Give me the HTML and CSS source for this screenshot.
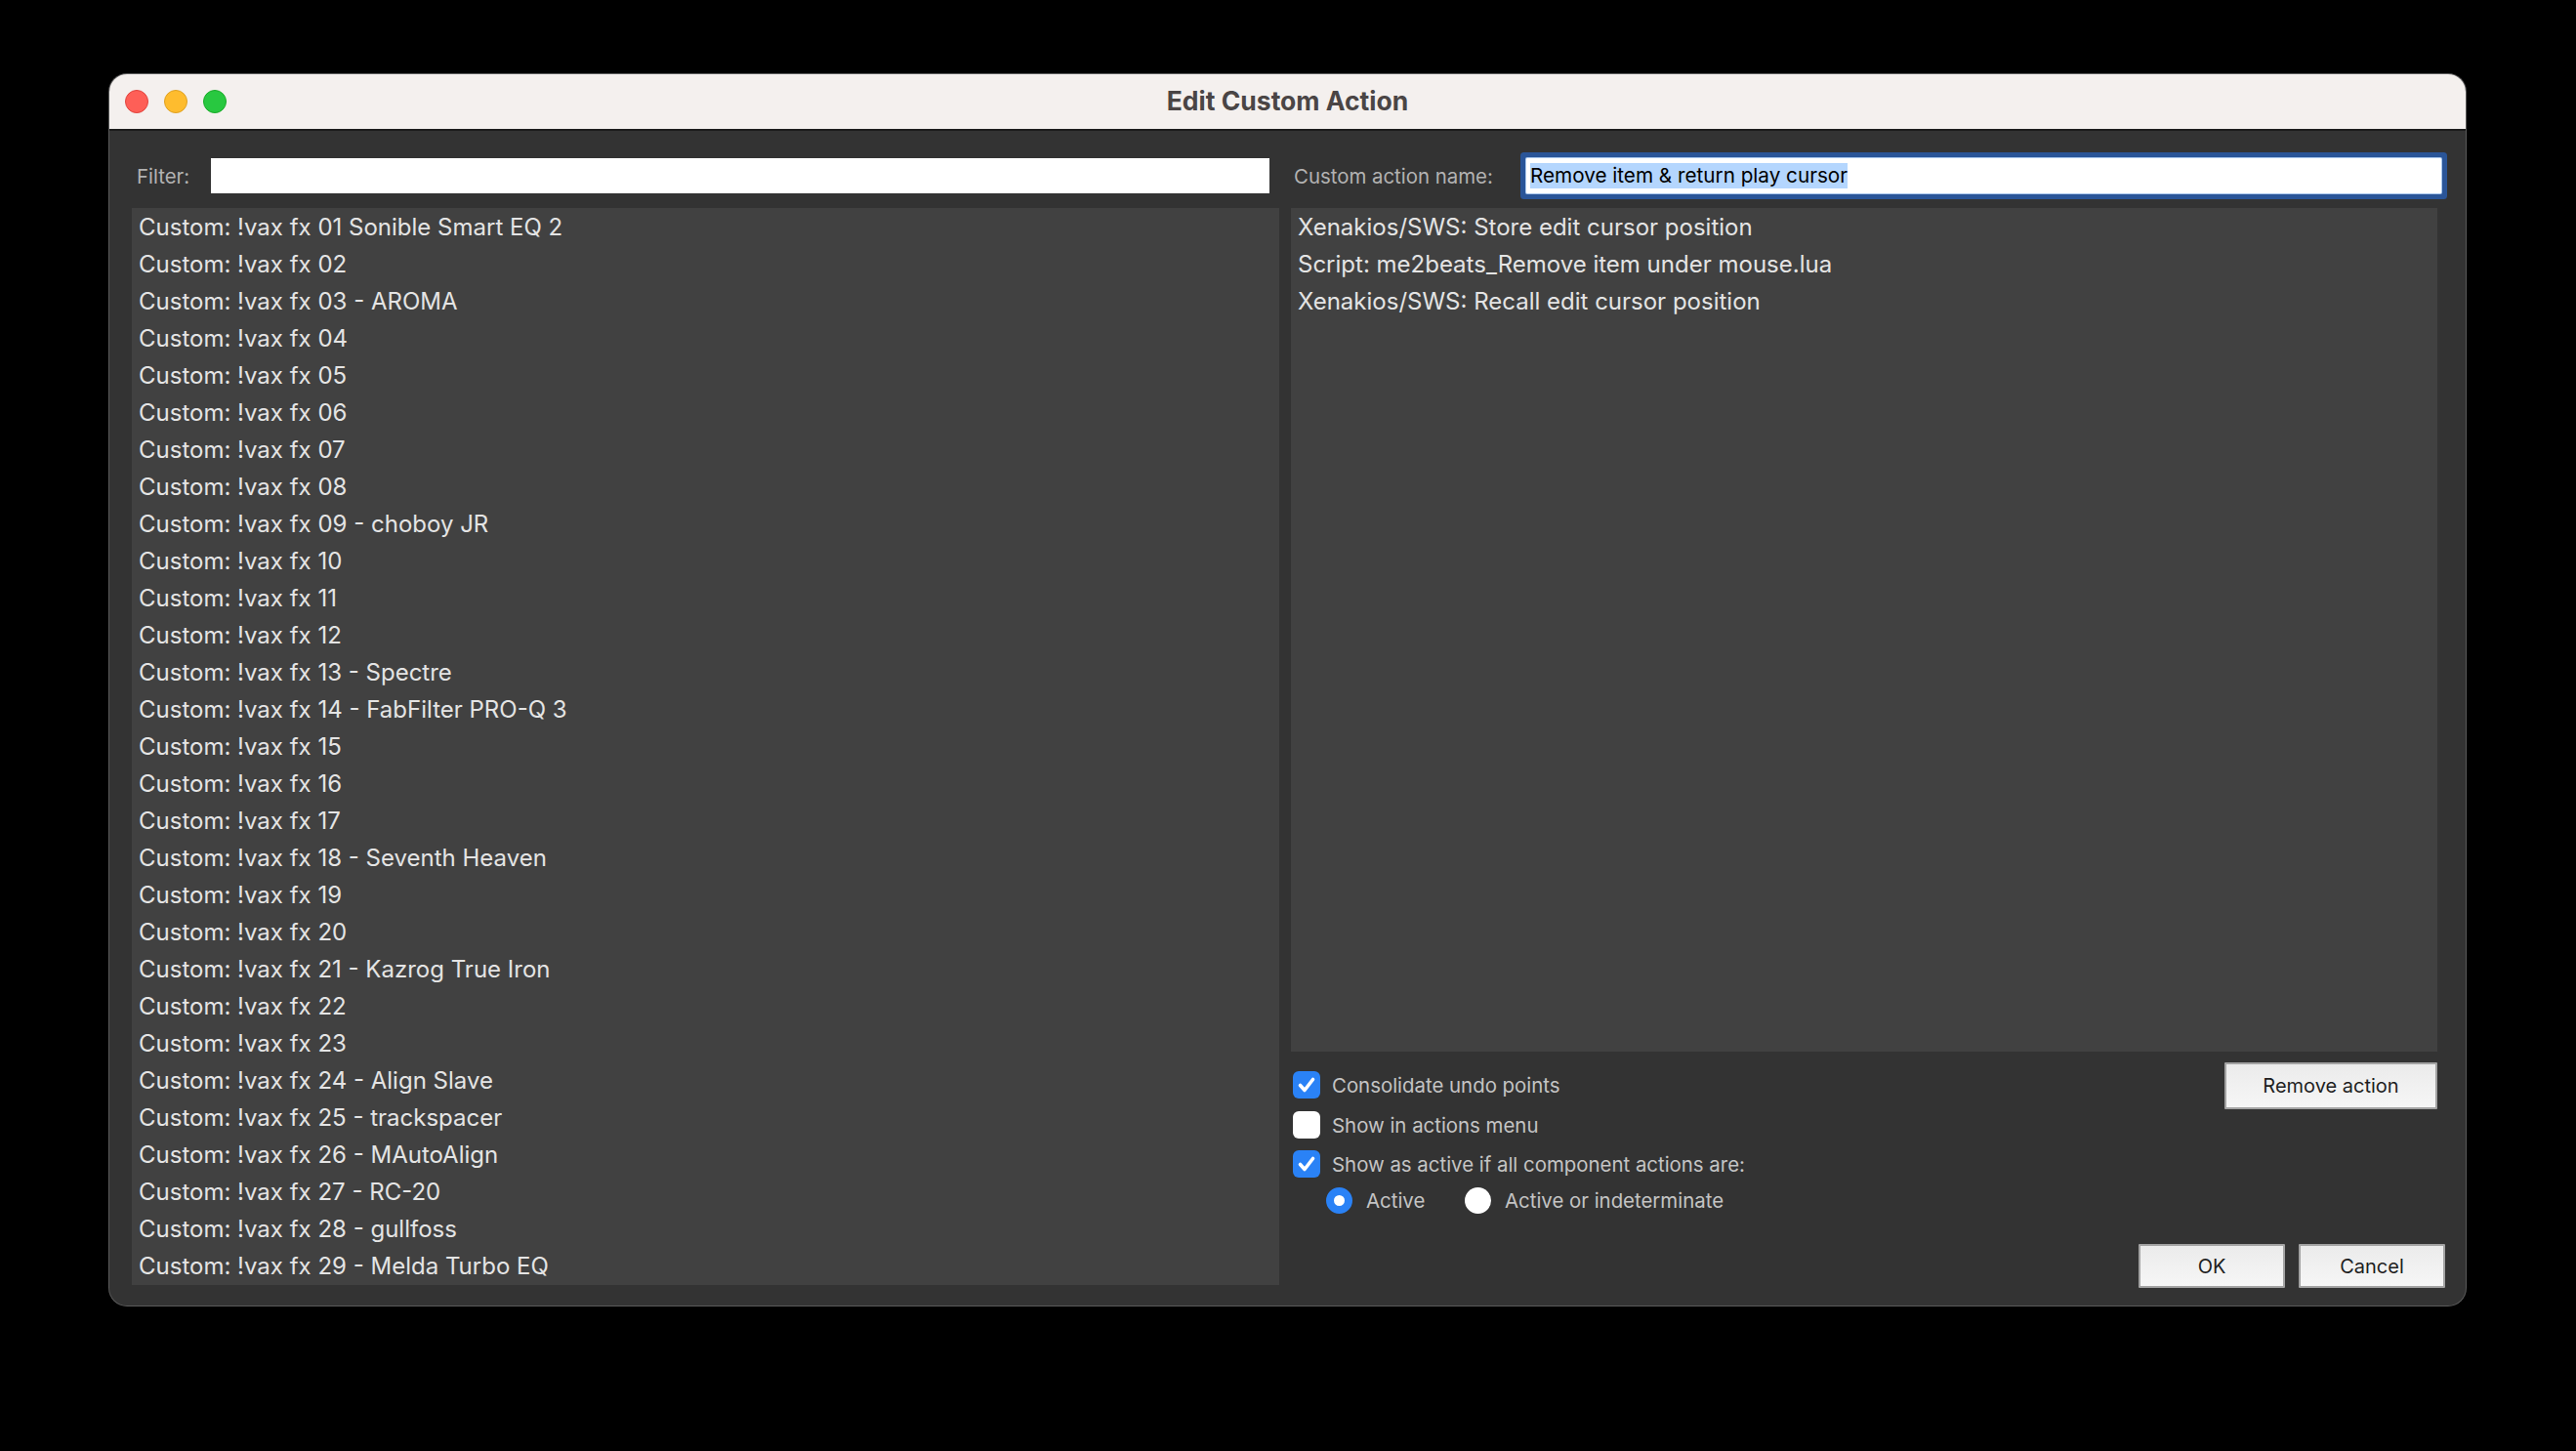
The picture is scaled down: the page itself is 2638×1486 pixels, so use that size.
FILE: index.html
```html
<!DOCTYPE html>
<html lang="en">
<head>
  <meta charset="UTF-8" />
  <meta name="viewport" content="width=device-width, initial-scale=1.0" />
  <title>Edit Custom Action</title>
  <link rel="stylesheet" href="styles.css">
</head>
<body>

<div class="window">
  <!-- Title bar -->
  <div class="titlebar">
    <div class="lights">
      <span class="light red"></span>
      <span class="light yellow"></span>
      <span class="light green"></span>
    </div>
    <div class="title">Edit Custom Action</div>
    <div></div>
  </div>

  <div class="content">
    <!-- Left: all actions -->
    <div class="column left">
      <div class="field-row">
        <span class="label filter-label">Filter:</span>
        <div class="textbox filter-box"></div>
      </div>
      <div class="list action-list">
        <div class="row">Custom: !vax fx 01 Sonible Smart EQ 2</div>
        <div class="row">Custom: !vax fx 02</div>
        <div class="row">Custom: !vax fx 03 - AROMA</div>
        <div class="row">Custom: !vax fx 04</div>
        <div class="row">Custom: !vax fx 05</div>
        <div class="row">Custom: !vax fx 06</div>
        <div class="row">Custom: !vax fx 07</div>
        <div class="row">Custom: !vax fx 08</div>
        <div class="row">Custom: !vax fx 09 - choboy JR</div>
        <div class="row">Custom: !vax fx 10</div>
        <div class="row">Custom: !vax fx 11</div>
        <div class="row">Custom: !vax fx 12</div>
        <div class="row">Custom: !vax fx 13 - Spectre</div>
        <div class="row">Custom: !vax fx 14 - FabFilter PRO-Q 3</div>
        <div class="row">Custom: !vax fx 15</div>
        <div class="row">Custom: !vax fx 16</div>
        <div class="row">Custom: !vax fx 17</div>
        <div class="row">Custom: !vax fx 18 - Seventh Heaven</div>
        <div class="row">Custom: !vax fx 19</div>
        <div class="row">Custom: !vax fx 20</div>
        <div class="row">Custom: !vax fx 21 - Kazrog True Iron</div>
        <div class="row">Custom: !vax fx 22</div>
        <div class="row">Custom: !vax fx 23</div>
        <div class="row">Custom: !vax fx 24 - Align Slave</div>
        <div class="row">Custom: !vax fx 25 - trackspacer</div>
        <div class="row">Custom: !vax fx 26 - MAutoAlign</div>
        <div class="row">Custom: !vax fx 27 - RC-20</div>
        <div class="row">Custom: !vax fx 28 - gullfoss</div>
        <div class="row">Custom: !vax fx 29 - Melda Turbo EQ</div>
      </div>
    </div>

    <!-- Right: this custom action -->
    <div class="column right">
      <div class="field-row">
        <span class="label name-label">Custom action name:</span>
        <div class="textbox name-box focused"><span class="selected">Remove item &amp; return play cursor</span></div>
      </div>
      <div class="list step-list">
        <div class="row">Xenakios/SWS: Store edit cursor position</div>
        <div class="row">Script: me2beats_Remove item under mouse.lua</div>
        <div class="row">Xenakios/SWS: Recall edit cursor position</div>
      </div>

      <div class="options">
        <div class="checks">
          <div class="check-row">
            <span class="checkbox on">
              <svg width="28" height="28" viewBox="0 0 28 28"><polyline points="7.5,14.5 12,19.5 20.5,8.5" fill="none" stroke="#fff" stroke-width="3.6" stroke-linecap="round" stroke-linejoin="round"/></svg>
            </span>
            <span class="opt-label">Consolidate undo points</span>
          </div>
          <div class="check-row">
            <span class="checkbox"></span>
            <span class="opt-label">Show in actions menu</span>
          </div>
          <div class="check-row">
            <span class="checkbox on">
              <svg width="28" height="28" viewBox="0 0 28 28"><polyline points="7.5,14.5 12,19.5 20.5,8.5" fill="none" stroke="#fff" stroke-width="3.6" stroke-linecap="round" stroke-linejoin="round"/></svg>
            </span>
            <span class="opt-label">Show as active if all component actions are:</span>
          </div>
          <div class="radio-row">
            <div class="radio-opt first">
              <span class="radio on"></span>
              <span class="opt-label">Active</span>
            </div>
            <div class="radio-opt">
              <span class="radio"></span>
              <span class="opt-label">Active or indeterminate</span>
            </div>
          </div>
        </div>
        <button class="btn remove-btn">Remove action</button>
      </div>

      <div class="footer">
        <button class="btn dlg-btn">OK</button>
        <button class="btn dlg-btn">Cancel</button>
      </div>
    </div>
  </div>
</div>

</body>
</html>
```

FILE: styles.css
```css
body {
  margin: 0;
  padding: 0;
  background: #000;
  font-family: Inter, "Liberation Sans", Arial, sans-serif;
  width: 2638px;
  height: 1486px;
  overflow: hidden;
}

.window {
  margin: 76px 0 0 112px;
  width: 2413px;
  height: 1261px;
  border-radius: 18px;
  overflow: hidden;
  background: #333333;
  box-shadow: 0 0 0 1px #5a5a5a;
  display: flex;
  flex-direction: column;
}

/* title bar */
.titlebar {
  height: 56px;
  flex: none;
  background: #f4f0ee;
  border-bottom: 2px solid #1c1c1c;
  display: grid;
  grid-template-columns: 1fr auto 1fr;
  align-items: center;
}

.lights {
  display: flex;
  gap: 16px;
  padding-left: 16px;
}

.light {
  width: 22px;
  height: 22px;
  border-radius: 50%;
  border: 1px solid transparent;
}

.red { background: #fe5f57; border-color: #e0443e; }
.yellow { background: #febc2e; border-color: #dea123; }
.green { background: #28c840; border-color: #1aab29; }

.title {
  font-size: 26.5px;
  font-weight: 700;
  color: #4a4545;
  padding-bottom: 2px;
}

/* main area */
.content {
  flex: 1;
  display: flex;
  gap: 12px;
  padding: 23px 20px 18px 23px;
  box-sizing: border-box;
  min-height: 0;
}

.column {
  display: flex;
  flex-direction: column;
  min-height: 0;
}

.column.left {
  width: 1175px;
  flex: none;
}

.column.right {
  flex: 1;
}

.field-row {
  height: 46px;
  flex: none;
  display: flex;
  align-items: center;
  margin-bottom: 10px;
}

.label {
  font-size: 20.4px;
  color: #b2b2b2;
}

.filter-label {
  width: 81px;
  padding-left: 5px;
  box-sizing: border-box;
}

.name-label {
  width: 241px;
  padding-left: 3px;
  box-sizing: border-box;
}

.textbox {
  height: 36px;
  background: #fff;
  box-sizing: border-box;
}

.filter-box {
  width: 1084px;
}

.name-box {
  width: 937px;
  padding-left: 4px;
  display: flex;
  align-items: center;
}

.focused {
  border-radius: 1px;
  box-shadow: 0 0 0 1px #a8c6ec, 0 0 0 6px #2a5598;
}

.selected {
  background: #b4d6fe;
  color: #000;
  font-size: 20.7px;
  line-height: 26px;
}

/* lists */
.list {
  background: #414141;
  overflow: hidden;
}

.action-list {
  flex: 1;
  margin-bottom: 3px;
}

.step-list {
  height: 864px;
  flex: none;
  margin-right: 9px;
}

.row {
  height: 38px;
  line-height: 40px;
  padding-left: 7px;
  font-size: 24px;
  color: #e4e4e4;
  white-space: nowrap;
}

/* options */
.options {
  display: flex;
  justify-content: space-between;
  align-items: flex-start;
  margin-top: 11px;
  margin-right: 9px;
}

.checks {
  padding-top: 9px;
  margin-left: 2px;
}

.check-row {
  height: 28px;
  display: flex;
  align-items: center;
  gap: 12px;
  margin-bottom: 13px;
}

.check-row:nth-child(2) {
  margin-bottom: 12px;
}

.check-row:nth-child(3) {
  margin-bottom: 10px;
}

.checkbox {
  width: 28px;
  height: 28px;
  border-radius: 6px;
  background: #fff;
  display: block;
}

.checkbox.on {
  background: #2a82f6;
}

.checkbox svg {
  display: block;
}

.opt-label {
  font-size: 20.4px;
  color: #c4c4c4;
}

.radio-row {
  display: flex;
  height: 27px;
  padding-left: 34px;
}

.radio-opt {
  display: flex;
  align-items: center;
  gap: 14px;
}

.radio-opt.first {
  width: 142px;
}

.radio {
  width: 27px;
  height: 27px;
  border-radius: 50%;
  background: #fff;
  box-sizing: border-box;
  display: block;
}

.radio.on {
  border: 8.5px solid #2a82f6;
  background: #fff;
}

/* buttons */
.btn {
  font-family: Inter, "Liberation Sans", Arial, sans-serif;
  font-size: 20px;
  color: #1e1e1e;
  background: linear-gradient(#ebebeb, #f6f6f6);
  border: 2px solid #a3a3a3;
  border-radius: 1px;
  padding: 0;
  cursor: pointer;
}

.remove-btn {
  width: 218px;
  height: 48px;
}

.footer {
  margin-top: auto;
  display: flex;
  justify-content: flex-end;
  gap: 14px;
  margin-right: 1px;
}

.dlg-btn {
  width: 150px;
  height: 45px;
}
```
